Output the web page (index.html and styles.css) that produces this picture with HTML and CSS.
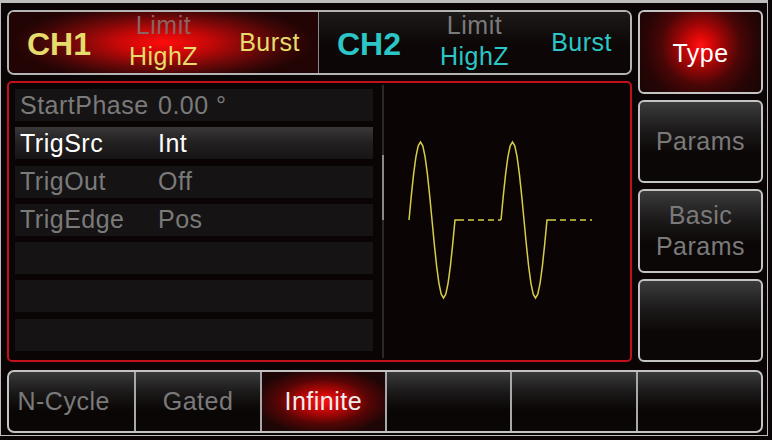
FILE: index.html
```html
<!DOCTYPE html>
<html lang="en">
<head>
  <meta charset="UTF-8" />
  <title>Burst – Type</title>
  <meta name="viewport" content="width=device-width, initial-scale=1" />
  <link rel="stylesheet" href="styles.css">
</head>
<body>

<div class="screen">
  <div class="main">
    <!-- channel status bar -->
    <div class="status">
      <div class="channel ch1">
        <span class="ch-name">CH1</span>
        <span class="ch-load"><span class="load-mode">Limit</span><span>HighZ</span></span>
        <span class="ch-mode">Burst</span>
      </div>
      <div class="channel ch2">
        <span class="ch-name">CH2</span>
        <span class="ch-load"><span class="load-mode">Limit</span><span>HighZ</span></span>
        <span class="ch-mode">Burst</span>
      </div>
    </div>

    <div class="panel">
      <div class="params">
        <div class="row"><span class="label">StartPhase</span><span>0.00 °</span></div>
        <div class="row selected"><span class="label">TrigSrc</span><span>Int</span></div>
        <div class="row"><span class="label">TrigOut</span><span>Off</span></div>
        <div class="row"><span class="label">TrigEdge</span><span>Pos</span></div>
        <div class="row"></div>
        <div class="row"></div>
        <div class="row"></div>
      </div>
      <div class="scroll"><div class="thumb"></div></div>
      <div class="graph">
        <svg width="246" height="277" viewBox="384 83 246 277">
          <polyline class="wave" points="409,220 411.3,195.9 413.6,174.1 415.9,156.9 418.2,145.8 420.5,142 422.8,145.8 425.1,156.9 427.4,174.1 429.7,195.9 432,220 434.3,244.1 436.6,265.9 438.9,283.1 441.2,294.2 443.5,298 445.8,294.2 448.1,283.1 450.4,265.9 452.7,244.1 455,220 458,220"/>
          <line class="wave idle" x1="458" y1="220" x2="501" y2="220"/>
          <polyline class="wave" points="501,220 503.3,195.9 505.6,174.1 507.9,156.9 510.2,145.8 512.5,142 514.8,145.8 517.1,156.9 519.4,174.1 521.7,195.9 524,220 526.3,244.1 528.6,265.9 530.9,283.1 533.2,294.2 535.5,298 537.8,294.2 540.1,283.1 542.4,265.9 544.7,244.1 547,220 550,220"/>
          <line class="wave idle" x1="550" y1="220" x2="592" y2="220"/>
        </svg>
      </div>
    </div>
  </div>

  <div class="side">
    <div class="softkey active">Type</div>
    <div class="softkey">Params</div>
    <div class="softkey">Basic<br>Params</div>
    <div class="softkey"></div>
  </div>

  <div class="menu">
    <div class="menu-item first">N-Cycle</div>
    <div class="menu-item">Gated</div>
    <div class="menu-item active">Infinite</div>
    <div class="menu-item"></div>
    <div class="menu-item"></div>
    <div class="menu-item"></div>
  </div>
</div>

</body>
</html>
```

FILE: styles.css
```css
:root {
  --bg: #0a0405;
  --frame: #c4c4c4;
  --gray-text: #7a7a7a;
  --yellow: #e6dc6c;
  --cyan: #2cc6c6;
  --red-line: #c2101c;
  --wave: #d6cd48;
}

* {
  box-sizing: border-box;
}

body {
  margin: 0;
  background: var(--bg);
  font-family: 'Liberation Sans', Arial, sans-serif;
}

.screen {
  width: 768px;
  height: 436px;
  border: 1px solid #bdbdbd;
  border-top-width: 3px;
  background: var(--bg);
  padding: 7px 4px 0 6px;
  display: grid;
  grid-template-columns: 625px 125px;
  column-gap: 6px;
  row-gap: 8px;
  align-content: start;
}

.main {
  display: flex;
  flex-direction: column;
  gap: 6px;
}

/* status bar */
.status {
  height: 65px;
  border: 2px solid #b4b4b4;
  border-radius: 7px;
  display: grid;
  grid-template-columns: 309px 1fr;
  overflow: hidden;
}

.channel {
  display: grid;
  grid-template-columns: 1fr auto 1fr;
  align-items: center;
  padding: 0 18px;
  font-size: 25px;
  letter-spacing: 0.5px;
}

.ch-name {
  justify-self: start;
  font-weight: bold;
  font-size: 32px;
  letter-spacing: 0;
  padding-top: 3px;
}

.ch-mode {
  justify-self: end;
}

.ch-load {
  display: flex;
  flex-direction: column;
  align-items: center;
  line-height: 31px;
  margin-top: -3px;
}

.ch1 {
  color: var(--yellow);
  background: radial-gradient(ellipse 150px 40px at 50% 50%, #ff0c0c 0%, #c80808 30%, #760808 60%, #3a0606 85%, #220404 100%);
}

.ch1 .load-mode {
  color: #8c6262;
}

.ch2 {
  color: var(--cyan);
  border-left: 1px solid #8a8a8a;
  background: linear-gradient(#1e1a1a, #0c0606 55%);
}

.ch2 .load-mode {
  color: #7a7a7a;
}

/* parameter panel */
.panel {
  height: 281px;
  border: 2px solid var(--red-line);
  border-radius: 5px;
  display: flex;
}

.params {
  width: 358px;
  margin: 6px 0 0 6px;
  display: grid;
  grid-auto-rows: 32px;
  row-gap: 6.3px;
  align-content: start;
}

.row {
  display: flex;
  align-items: center;
  padding-left: 5px;
  background: #151313;
  color: var(--gray-text);
  font-size: 25px;
  letter-spacing: 0.5px;
}

.row.selected {
  color: #fff;
  background: linear-gradient(#3a3838, #232121 45%, #161414);
}

.label {
  width: 138px;
}

.scroll {
  width: 2px;
  margin: 2px 0 2px 9px;
  background: #2a2828;
}

.thumb {
  margin-top: 70px;
  height: 65px;
  background: #8a8888;
}

.graph {
  flex: 1;
}

.graph svg {
  display: block;
}

.wave {
  fill: none;
  stroke: var(--wave);
  stroke-width: 1.5;
}

.wave.idle {
  stroke-dasharray: 6 4;
}

/* soft keys */
.side {
  display: grid;
  grid-template-rows: repeat(4, 1fr);
  gap: 6px;
}

.softkey {
  border: 2px solid var(--frame);
  border-radius: 6px;
  background: linear-gradient(#3c3c3c, #1c1a1a 35%, #0c0707 65%);
  display: flex;
  align-items: center;
  justify-content: center;
  text-align: center;
  color: var(--gray-text);
  font-size: 25px;
  letter-spacing: 0.5px;
  line-height: 31px;
}

.softkey.active {
  color: #fff;
  padding-top: 4px;
  background: radial-gradient(circle at 50% 42%, #ff1414 0%, #e00808 12%, #9a0606 30%, #4a0606 52%, #260505 75%, #1a0505 100%);
}

/* bottom menu */
.menu {
  grid-column: 1 / -1;
  height: 63px;
  border: 2px solid var(--frame);
  border-radius: 7px;
  display: grid;
  grid-template-columns: repeat(6, 1fr);
  overflow: hidden;
  background: linear-gradient(#3a3a3a, #1a1818 35%, #0b0606 65%);
}

.menu-item {
  border-left: 2px solid #a8a8a8;
  display: flex;
  align-items: center;
  justify-content: center;
  color: var(--gray-text);
  font-size: 25px;
  letter-spacing: 0.5px;
}

.menu-item.first {
  border-left: none;
  padding-right: 16px;
}

.menu-item.active {
  color: #eee;
  background: radial-gradient(ellipse 70px 34px at 50% 50%, #ff1010 0%, #b00606 35%, #560505 65%, #1c0606 100%);
}
```
